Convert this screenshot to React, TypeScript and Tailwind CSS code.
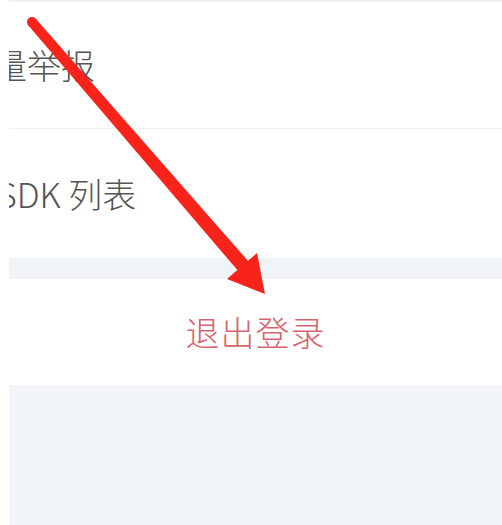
export default function App() {
  const font = { fontFamily: '"Noto Sans CJK SC", "Noto Sans", sans-serif' };

  return (
    <div className="relative h-[525px] w-[502px] overflow-hidden bg-white" style={font}>
      <div className="ml-[9px] flex h-full flex-col overflow-hidden">
        <div className="h-[2px] bg-[#f0f0f0]" />
        <div className="flex h-[127px] items-center border-b border-[#f0f0f0] bg-white">
          <span className="ml-[-50px] whitespace-nowrap text-[34px] font-light leading-none text-[#555555]">批量举报</span>
        </div>
        <div className="flex h-[129px] items-center bg-white">
          <span className="ml-[-12px] whitespace-nowrap text-[34px] font-light leading-none text-[#555555]">SDK 列表</span>
        </div>
        <div className="h-[21px] bg-[#f1f4f7]" />
        <div className="flex h-[106px] items-center justify-center bg-white">
          <span className="text-[34px] font-light leading-none tracking-[1px] text-[#d7646c]">退出登录</span>
        </div>
        <div className="flex-1 bg-[#f1f4f8]" />
      </div>

      <svg className="pointer-events-none absolute left-0 top-0" width="502" height="525" viewBox="0 0 502 525">
        <circle cx="32" cy="22" r="5" fill="#f8231a" />
        <polygon points="28.2,25.3 35.8,18.7 249.3,262.4 238.7,271.6" fill="#f8231a" />
        <polygon points="265,294 227,279 257,253" fill="#f8231a" />
      </svg>
    </div>
  );
}
